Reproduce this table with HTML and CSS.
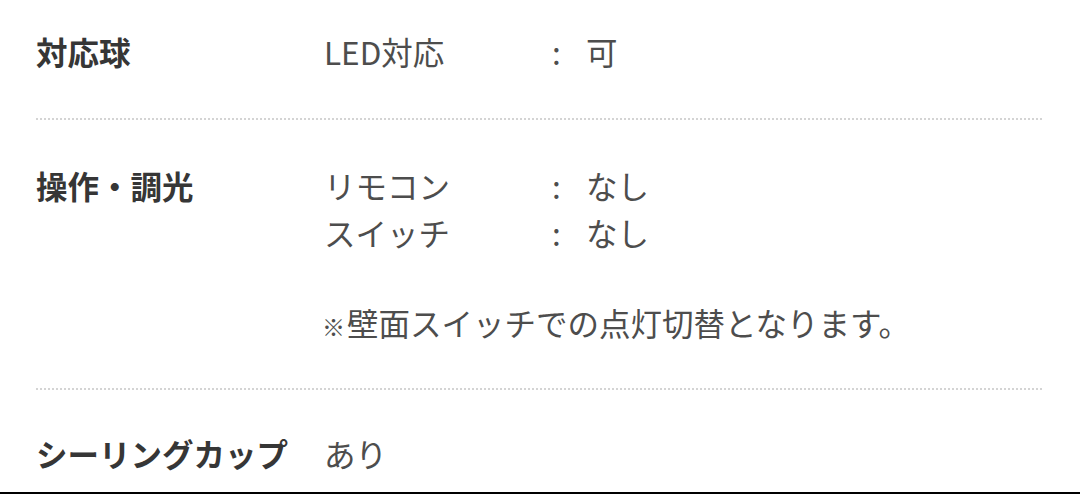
FILE: index.html
```html
<!DOCTYPE html>
<html lang="ja">
<head>
<meta charset="utf-8">
<link rel="stylesheet" href="styles.css">
</head>
<body>
<div class="specs">
  <div class="row row-first">
    <div class="label">対応球</div>
    <div class="content">
      <div class="kv"><span class="k">LED対応</span><span class="c">:</span><span class="v">可</span></div>
    </div>
  </div>
  <div class="divider"></div>
  <div class="row">
    <div class="label">操作・調光</div>
    <div class="content">
      <div class="kv"><span class="k">リモコン</span><span class="c">:</span><span class="v">なし</span></div>
      <div class="kv"><span class="k">スイッチ</span><span class="c">:</span><span class="v">なし</span></div>
      <p class="note"><span class="mark">※</span>壁面スイッチでの点灯切替となります。</p>
    </div>
  </div>
  <div class="divider"></div>
  <div class="row row-last">
    <div class="label">シーリングカップ</div>
    <div class="content">
      <div class="plain">あり</div>
    </div>
  </div>
</div>
<div class="bottom-bar"></div>
</body>
</html>
```

FILE: styles.css
```css
html, body {
  margin: 0;
  padding: 0;
  background: #ffffff;
}
body {
  width: 1080px;
  height: 494px;
  overflow: hidden;
  display: flex;
  flex-direction: column;
  font-family: "Noto Sans CJK JP", "Noto Sans", sans-serif;
  font-size: 31.5px;
  line-height: 47px;
  color: #4d4d4d;
}
.specs {
  flex: 1;
  margin: 0 37px 0 36px;
  display: flex;
  flex-direction: column;
}
.row {
  display: flex;
  padding: 42px 0;
}
.row-first {
  padding-top: 28px;
  padding-bottom: 43px;
}
.row-last {
  padding-top: 40px;
  padding-bottom: 0;
}
.label {
  width: 288px;
  flex: none;
  font-weight: 700;
  color: #363636;
}
.content {
  flex: 1;
}
.kv {
  display: grid;
  grid-template-columns: 228px 34px auto;
}
.note {
  margin: 43px 0 0 -2px;
  height: 47px;
}
.mark {
  font-size: 23px;
  line-height: 1;
  margin-right: 2px;
}
.divider {
  height: 2px;
  background-image: linear-gradient(to right, #d4d4d4 50%, transparent 50%);
  background-size: 4px 2px;
  background-repeat: repeat-x;
}
.bottom-bar {
  height: 2px;
  background: #000000;
  flex: none;
}
```
